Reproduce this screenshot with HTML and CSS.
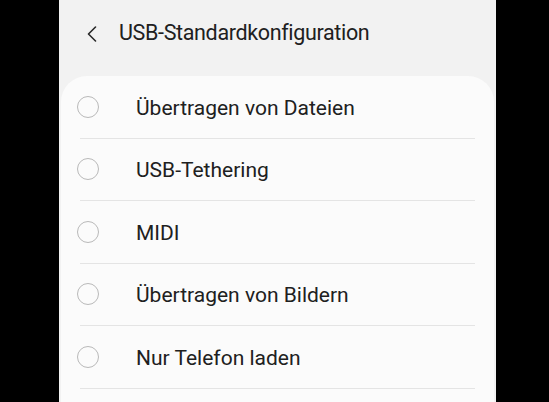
FILE: index.html
```html
<!DOCTYPE html>
<html lang="de">
<head>
<meta charset="utf-8">
<link rel="stylesheet" href="styles.css">
</head>
<body>
<div class="frame">
  <div class="screen">
    <header class="header">
      <svg class="back" width="10" height="16" viewBox="0 0 10 16"><polyline points="8.5,1 1.5,8 8.5,15" fill="none" stroke="#2a2a2a" stroke-width="1.6" stroke-linecap="round" stroke-linejoin="round"/></svg>
      <h1 class="title">USB-Standardkonfiguration</h1>
    </header>
    <div class="card">
      <div class="row"><span class="radio"></span><span class="label">Übertragen von Dateien</span></div>
      <div class="row"><span class="radio"></span><span class="label">USB-Tethering</span></div>
      <div class="row"><span class="radio"></span><span class="label">MIDI</span></div>
      <div class="row"><span class="radio"></span><span class="label">Übertragen von Bildern</span></div>
      <div class="row"><span class="radio"></span><span class="label">Nur Telefon laden</span></div>
    </div>
  </div>
</div>
</body>
</html>
```
FILE: styles.css
```css
html, body {
  margin: 0;
  padding: 0;
  background: #000;
  height: 100%;
  overflow: hidden;
}
.frame {
  display: flex;
  height: 402px;
  padding-left: 59px;
}
.screen {
  width: 437px;
  background: #f2f2f2;
  font-family: Roboto, "Liberation Sans", sans-serif;
  color: #202020;
  display: flex;
  flex-direction: column;
}
.header {
  height: 76px;
  display: flex;
  align-items: flex-start;
  box-sizing: border-box;
  padding-left: 28px;
}
.back {
  margin-top: 26px;
  flex: none;
}
.title {
  margin: 0 0 0 22px;
  font-size: 21.5px;
  font-weight: 400;
  line-height: 26px;
  padding-top: 20px;
  letter-spacing: -0.35px;
}
.card {
  flex: 1;
  margin: 0 2px;
  background: #fbfbfb;
  border-radius: 26px 26px 0 0;
  padding: 0 19px;
}
.row {
  height: 62.5px;
  box-sizing: border-box;
  border-bottom: 1px solid #e4e4e4;
  display: flex;
  align-items: center;
}
.radio {
  width: 22px;
  height: 22px;
  box-sizing: border-box;
  border: 1px solid #b9b9b9;
  border-radius: 50%;
  margin-left: -3px;
  flex: none;
}
.label {
  margin-left: 37px;
  font-size: 21px;
  line-height: 24px;
  padding-top: 2px;
}
```
